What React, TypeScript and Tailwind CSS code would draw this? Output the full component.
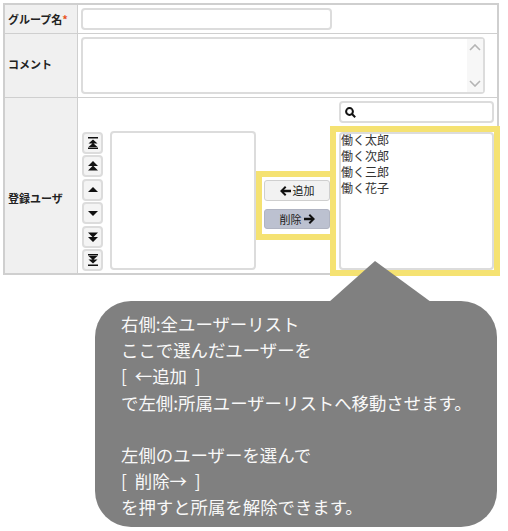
const font = { fontFamily: '"Noto Sans CJK JP", "Noto Sans", sans-serif' };

const users = ['働く太郎', '働く次郎', '働く三郎', '働く花子'];

// ordering buttons: bars above/below and how many carets
const MoveIcon = ({ kind }: { kind: string }) => {
  const paths: Record<string, string> = {
    top: 'M1 0h10v1.6H1z M6 2.5L10.5 6.5H1.5z M6 6L10.5 10H1.5z M1 10.4h10V12H1z',
    up: 'M6 1L11 6H1z M6 5.5L11 10.5H1z',
    one: 'M6 3L11 8H1z',
    oneDown: 'M6 9L1 4H11z',
    down: 'M6 6.5L1 1.5H11z M6 11L1 6H11z',
    bottom: 'M1 0h10v1.6H1z M6 6L1.5 2H10.5z M6 9.5L1.5 5.5H10.5z M1 10.4h10V12H1z',
  };
  return (
    <svg width="12" height="12" viewBox="0 0 12 12" fill="#111">
      <path d={paths[kind]} />
    </svg>
  );
};

const LeftArrow = () => (
  <svg width="11" height="10" viewBox="0 0 11 10" fill="#111">
    <path d="M5 0l1.4 1.4L4 3.7h7v2.6H4l2.4 2.3L5 10 0 5z" />
  </svg>
);

const RightArrow = () => (
  <svg width="11" height="10" viewBox="0 0 11 10" fill="#111">
    <path d="M6 0L4.6 1.4 7 3.7H0v2.6h7L4.6 8.6 6 10l5-5z" />
  </svg>
);

const App = () => {
  return (
    <div className="relative w-[508px] h-[531px] bg-white overflow-hidden pt-[3px] pl-[3px]" style={font}>
      <div className="w-[496px] border-2 border-[#cfcfcf] text-[#222]">
        <div className="flex h-[29px] border-b border-[#cfcfcf]">
          <div className="w-[73px] shrink-0 bg-[#f0f0f0] border-r border-[#cfcfcf] flex items-center pl-[3px] text-[11px] font-bold">
            グループ名<span className="text-[#e8541e]">*</span>
          </div>
          <div className="flex-1 pl-[3px] pt-[3px]">
            <div className="w-[251px] h-[22px] bg-white border-2 border-[#dcdcdc] rounded-[4px]" />
          </div>
        </div>

        <div className="flex h-[64px] border-b border-[#cfcfcf]">
          <div className="w-[73px] shrink-0 bg-[#f0f0f0] border-r border-[#cfcfcf] flex items-center pl-[3px] pb-[3px] text-[11px] font-bold">
            コメント
          </div>
          <div className="flex-1 pl-[3px] pt-[3px]">
            <div className="w-[404px] h-[57px] border-2 border-[#dcdcdc] rounded-[4px] flex justify-end">
              <div className="w-[16px] bg-[#f7f7f7] flex flex-col justify-between items-center py-[5px]">
                <svg width="12" height="7" viewBox="0 0 12 7" fill="none" stroke="#b4b4b4" strokeWidth="1.6"><path d="M1 6l5-5 5 5" /></svg>
                <svg width="12" height="7" viewBox="0 0 12 7" fill="none" stroke="#b4b4b4" strokeWidth="1.6"><path d="M1 1l5 5 5-5" /></svg>
              </div>
            </div>
          </div>
        </div>

        <div className="flex h-[175px]">
          <div className="w-[73px] shrink-0 bg-[#f0f0f0] border-r border-[#cfcfcf] flex items-center pl-[3px] pt-[26px] text-[11px] font-bold">
            登録ユーザ
          </div>
          <div className="flex-1 flex pl-[4px]">
            <div className="flex flex-col gap-[1.4px] pt-[34px] w-[25px] shrink-0">
              {['top', 'up', 'one', 'oneDown', 'down', 'bottom'].map((k) => (
                <div key={k} className="w-[21px] h-[22px] bg-[#f4f4f4] border-2 border-[#dcdcdc] rounded-[4px] flex items-center justify-center">
                  <MoveIcon kind={k} />
                </div>
              ))}
            </div>
            <div className="pt-[33px] ml-[3px]">
              <div className="w-[146px] h-[139px] border-2 border-[#dcdcdc] rounded-[4px]" />
            </div>
            <div className="w-[74px] shrink-0 flex flex-col items-end pt-[82px] gap-[8px]">
              <div className="w-[66px] h-[21px] bg-[#f2f2f2] border border-[#cfcfcf] rounded-[3px] flex items-center justify-center gap-[2px] text-[11px]">
                <LeftArrow />追加
              </div>
              <div className="w-[66px] h-[20px] bg-[#bcc1d0] border border-[#b0b4c2] rounded-[3px] flex items-center justify-center gap-[2px] text-[11px]">
                削除<RightArrow />
              </div>
            </div>
            <div className="flex-1 flex flex-col ml-[9px] pt-[3px]">
              <div className="w-[155px] h-[22px] border-2 border-[#dcdcdc] rounded-[4px] flex items-center pl-[4px]">
                <svg width="11" height="11" viewBox="0 0 11 11" fill="none" stroke="#111" strokeWidth="2">
                  <circle cx="4.5" cy="4.5" r="3.4" />
                  <path d="M7 7l3.2 3.2" />
                </svg>
              </div>
              <div className="w-[155px] h-[138px] mt-[9px] border-2 border-[#dcdcdc] rounded-[4px] text-[12px] leading-[16px] text-[#333]">
                <div className="-mt-[2px]">
                  {users.map((u) => (
                    <div key={u}>{u}</div>
                  ))}
                </div>
              </div>
            </div>
          </div>
        </div>
      </div>

      {/* highlights and callout sit over the form */}
      <div className="absolute left-[256px] top-[171px] w-[80px] h-[69px] border-[6px] border-r-0 border-[#f5e272]" />
      <div className="absolute left-[330px] top-[126px] w-[170px] h-[150px] border-[6px] border-[#f5e272]" />

      <svg className="absolute left-[329px] top-[261px]" width="102" height="41" viewBox="0 0 102 41" fill="#808080">
        <path d="M46 0L102 41H0z" />
      </svg>
      <div className="absolute left-[95px] top-[301px] w-[402px] h-[226px] bg-[#808080] rounded-[36px] pl-[26px] pt-[10px] text-[17.4px] leading-[26.2px] text-[#f8f8f8] whitespace-nowrap">
        <div>右側:全ユーザーリスト</div>
        <div>ここで選んだユーザーを</div>
        <div className="[word-spacing:4px]">[ ←追加 ]</div>
        <div>で左側:所属ユーザーリストへ移動させます。</div>
        <div className="h-[26.2px]" />
        <div>左側のユーザーを選んで</div>
        <div className="[word-spacing:4px]">[ 削除→ ]</div>
        <div>を押すと所属を解除できます。</div>
      </div>
    </div>
  );
};

export default App;
